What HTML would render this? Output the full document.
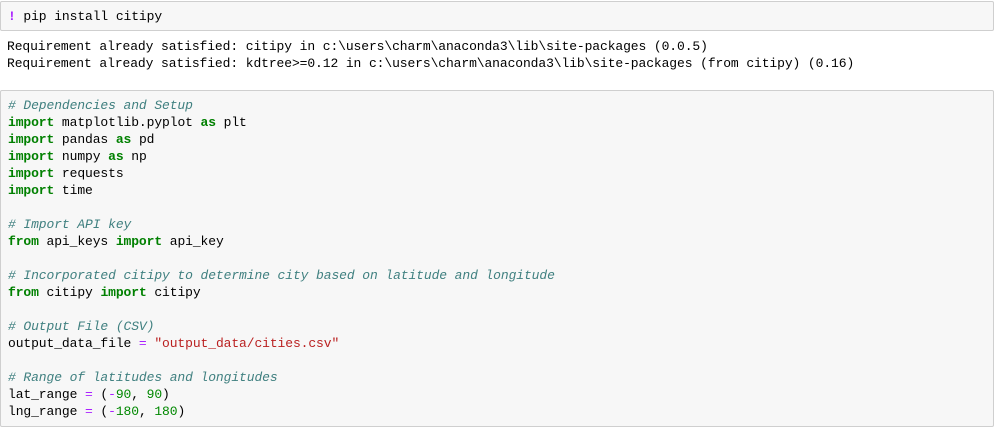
<!DOCTYPE html>
<html><head><style>
body{margin:0;background:#fff;width:997px;height:429px;overflow:hidden;font-family:"Liberation Mono",monospace;font-size:13px;}
.cell{position:absolute;left:0;width:994px;background:#f7f7f7;border:1px solid #cfcfcf;border-radius:2px;box-sizing:border-box;}
pre{margin:0;font-family:inherit;font-size:13px;line-height:17px;white-space:pre;color:#000;letter-spacing:-0.1px;}
.k{color:#008000;font-weight:bold}.c{color:#408080;font-style:italic}.o{color:#aa22ff}.s{color:#ba2121}.n{color:#080}
.m{color:#aa22ff;font-weight:bold}
</style></head><body>
<div class="cell" style="top:1px;height:30px;"><pre style="padding:6px 0 0 7px"><span class="m">!</span> pip install citipy</pre></div>
<pre style="position:absolute;left:7px;top:38px">Requirement already satisfied: citipy in c:\users\charm\anaconda3\lib\site-packages (0.0.5)
Requirement already satisfied: kdtree&gt;=0.12 in c:\users\charm\anaconda3\lib\site-packages (from citipy) (0.16)</pre>
<div class="cell" style="top:90px;height:337px;"><pre style="padding:6px 0 0 7px"><span class="c"># Dependencies and Setup</span>
<span class="k">import</span> matplotlib.pyplot <span class="k">as</span> plt
<span class="k">import</span> pandas <span class="k">as</span> pd
<span class="k">import</span> numpy <span class="k">as</span> np
<span class="k">import</span> requests
<span class="k">import</span> time

<span class="c"># Import API key</span>
<span class="k">from</span> api_keys <span class="k">import</span> api_key

<span class="c"># Incorporated citipy to determine city based on latitude and longitude</span>
<span class="k">from</span> citipy <span class="k">import</span> citipy

<span class="c"># Output File (CSV)</span>
output_data_file <span class="o">=</span> <span class="s">"output_data/cities.csv"</span>

<span class="c"># Range of latitudes and longitudes</span>
lat_range <span class="o">=</span> (<span class="o">-</span><span class="n">90</span>, <span class="n">90</span>)
lng_range <span class="o">=</span> (<span class="o">-</span><span class="n">180</span>, <span class="n">180</span>)</pre></div>
</body></html>
